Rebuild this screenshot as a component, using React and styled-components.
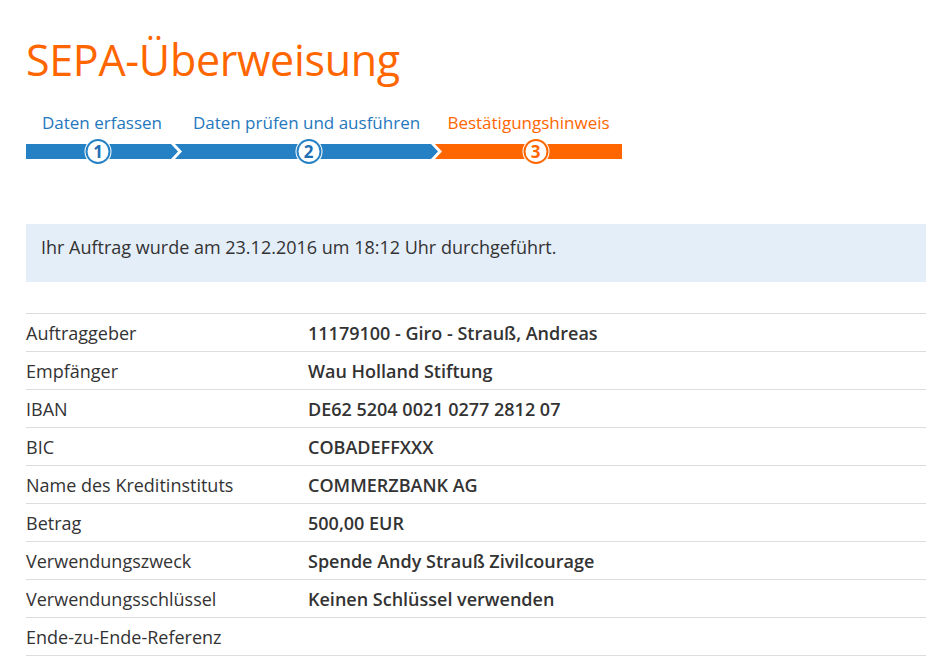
import { createGlobalStyle, styled } from "styled-components";

const GlobalStyle = createGlobalStyle`
  html, body {
    margin: 0;
    padding: 0;
    background: #fff;
  }
  body {
    font-family: "Segoe UI", "Open Sans", "Noto Sans", sans-serif;
    color: #333;
  }
`;

const Page = styled.div`
  padding: 30px 24px 0 26px;
  width: 900px;
`;

const Title = styled.h1`
  margin: 0;
  font-size: 43px;
  font-weight: 400;
  color: #ff6600;
  line-height: 60px;
  letter-spacing: -0.3px;
`;

const Steps = styled.div`
  display: flex;
  gap: 2px;
  margin-top: 22px;
`;

const Step = styled.div`
  display: flex;
  flex-direction: column;
  align-items: center;
  width: ${(p) => p.$width}px;
  margin-left: ${(p) => (p.$first ? 0 : -5)}px;
`;

const StepLabel = styled.div`
  font-size: 17px;
  line-height: 22px;
  color: ${(p) => (p.$active ? "#ff6600" : "#2577bd")};
  white-space: nowrap;
  margin-bottom: 10px;
`;

const BarWrap = styled.div`
  position: relative;
  align-self: stretch;
  display: flex;
`;

const Bar = styled.div`
  flex: 1;
  height: 15px;
  background: ${(p) => (p.$active ? "#ff6600" : "#2581c4")};
  clip-path: ${(p) =>
    p.$first
      ? "polygon(0 0, calc(100% - 7px) 0, 100% 50%, calc(100% - 7px) 100%, 0 100%)"
      : p.$last
      ? "polygon(0 0, 100% 0, 100% 100%, 0 100%, 7px 50%)"
      : "polygon(0 0, calc(100% - 7px) 0, 100% 50%, calc(100% - 7px) 100%, 0 100%, 7px 50%)"};
`;

const Circle = styled.div`
  position: absolute;
  top: -5px;
  left: 50%;
  margin-left: ${(p) => p.$shift || 0}px;
  transform: translateX(-50%);
  width: 21px;
  height: 21px;
  border-radius: 50%;
  background: #fff;
  border: 2px solid ${(p) => (p.$active ? "#ff6600" : "#2581c4")};
  box-shadow: 0 0 0 1px #fff;
  color: ${(p) => (p.$active ? "#ff6600" : "#1f6fb5")};
  font-size: 17px;
  font-weight: 700;
  line-height: 21px;
  text-align: center;
`;

const Notice = styled.div`
  margin-top: 65px;
  background: #e4eef8;
  padding: 11px 15px;
  height: 36px;
  font-size: 18px;
  line-height: 24px;
  color: #333;
`;

const Table = styled.div`
  margin-top: 31px;
  border-top: 1px solid #dddddd;
`;

const Row = styled.div`
  display: grid;
  grid-template-columns: 282px 1fr;
  height: 37px;
  align-items: center;
  border-bottom: 1px solid #dddddd;
  font-size: 18px;
`;

const Label = styled.div`
  color: #333;
`;

const Value = styled.div`
  font-weight: 600;
  color: #333;
`;

const steps = [
  { label: "Daten erfassen", width: 152, circle: -4 },
  { label: "Daten prüfen und ausführen", width: 263, circle: 2 },
  { label: "Bestätigungshinweis", width: 187, circle: 7, active: true },
];

const rows = [
  ["Auftraggeber", "11179100 - Giro - Strauß, Andreas"],
  ["Empfänger", "Wau Holland Stiftung"],
  ["IBAN", "DE62 5204 0021 0277 2812 07"],
  ["BIC", "COBADEFFXXX"],
  ["Name des Kreditinstituts", "COMMERZBANK AG"],
  ["Betrag", "500,00 EUR"],
  ["Verwendungszweck", "Spende Andy Strauß Zivilcourage"],
  ["Verwendungsschlüssel", "Keinen Schlüssel verwenden"],
  ["Ende-zu-Ende-Referenz", ""],
];

export default function App() {
  return (
    <>
      <GlobalStyle />
      <Page>
        <Title>SEPA-Überweisung</Title>
        <Steps>
          {steps.map((s, i) => (
            <Step key={s.label} $width={s.width} $first={i === 0}>
              <StepLabel $active={s.active}>{s.label}</StepLabel>
              <BarWrap>
                <Bar
                  $active={s.active}
                  $first={i === 0}
                  $last={i === steps.length - 1}
                />
                <Circle $active={s.active} $shift={s.circle}>
                  {i + 1}
                </Circle>
              </BarWrap>
            </Step>
          ))}
        </Steps>
        <Notice>Ihr Auftrag wurde am 23.12.2016 um 18:12 Uhr durchgeführt.</Notice>
        <Table>
          {rows.map(([label, value]) => (
            <Row key={label}>
              <Label>{label}</Label>
              <Value>{value}</Value>
            </Row>
          ))}
        </Table>
      </Page>
    </>
  );
}
